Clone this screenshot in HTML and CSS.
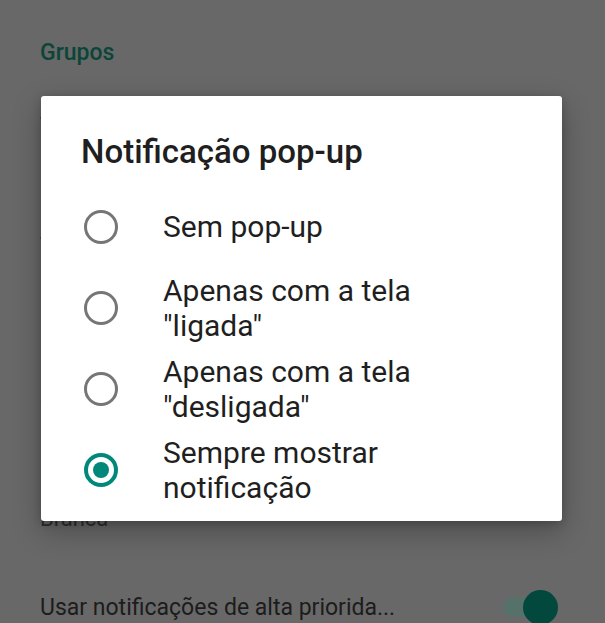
FILE: index.html
```html
<!DOCTYPE html>
<html lang="pt-BR">
<head>
  <meta charset="UTF-8">
  <meta name="viewport" content="width=device-width, initial-scale=1.0">
  <title>Notificação pop-up</title>
  <link rel="stylesheet" href="styles.css">
</head>
<body>
  <div class="screen">
    <div class="settings">
      <h2 class="settings__header">Grupos</h2>

      <div class="pref">
        <div class="pref__title">Tom de notificação</div>
        <div class="pref__sub">Padrão (Spaceline)</div>
      </div>
      <div class="pref">
        <div class="pref__title">Vibrar</div>
        <div class="pref__sub">Padrão</div>
      </div>
      <div class="pref">
        <div class="pref__title">Notificação pop-up</div>
        <div class="pref__sub">Sempre mostrar notificação</div>
      </div>
      <div class="pref">
        <div class="pref__title">Luz</div>
        <div class="pref__sub">Branca</div>
      </div>
      <div class="pref pref--switch">
        <div class="pref__title">Usar notificações de alta priorida...</div>
        <div class="switch">
          <div class="switch__track"></div>
          <div class="switch__thumb"></div>
        </div>
      </div>
    </div>

    <div class="dialog">
      <h1 class="dialog__title">Notificação pop-up</h1>
      <div class="dialog__options">
        <div class="option">
          <span class="radio"></span>
          <span class="option__label">Sem pop-up</span>
        </div>
        <div class="option">
          <span class="radio"></span>
          <span class="option__label">Apenas com a tela "ligada"</span>
        </div>
        <div class="option">
          <span class="radio"></span>
          <span class="option__label">Apenas com a tela "desligada"</span>
        </div>
        <div class="option option--checked">
          <span class="radio"></span>
          <span class="option__label">Sempre mostrar notificação</span>
        </div>
      </div>
    </div>
  </div>
</body>
</html>
```

FILE: styles.css
```css
*,
*::after,
*::before {
  padding: 0;
  margin: 0;
  box-sizing: border-box;
}

:root {
  --scrim: #686868;
  --dim-teal: #0b4539;
  --dim-text: #1c1c1c;
  --dim-sub: #2e2e2e;
  --teal: #00897b;
  --radio-off: #767676;
  --text: #1f1f1f;
}

body {
  width: 605px;
  height: 623px;
  overflow: hidden;
  background-color: var(--scrim);
  font-family: Roboto, "Noto Sans", sans-serif;
}

.screen {
  position: relative;
  height: 100%;
}

.settings__header {
  padding: 39px 40px 15px;
  font-size: 23px;
  line-height: 28px;
  font-weight: 500;
  color: var(--dim-teal);
}

.pref {
  padding: 28px 40px;
}

.pref__title {
  font-size: 23px;
  line-height: 34px;
  color: var(--dim-text);
}

.pref__sub {
  font-size: 22px;
  line-height: 30px;
  color: var(--dim-sub);
}

.pref--switch {
  display: flex;
  align-items: center;
  justify-content: space-between;
  padding-right: 47px;
}

.switch {
  position: relative;
  width: 55px;
  height: 35px;
}

.switch__track {
  position: absolute;
  left: 0;
  top: 7px;
  width: 42px;
  height: 20px;
  border-radius: 10px;
  background-color: #56706a;
}

.switch__thumb {
  position: absolute;
  right: 0;
  top: 0;
  width: 35px;
  height: 35px;
  border-radius: 50%;
  background-color: #02483d;
}

/* dialog */

.dialog {
  position: absolute;
  left: 41px;
  top: 96px;
  width: 521px;
  padding: 36px 0 11px;
  border-radius: 3px;
  background-color: #fff;
  box-shadow: 0 10px 28px rgba(0, 0, 0, 0.28), 0 2px 8px rgba(0, 0, 0, 0.18);
}

.dialog__title {
  padding: 0 40px;
  margin-bottom: 14px;
  font-size: 33px;
  line-height: 40px;
  font-weight: 500;
  color: var(--text);
}

.option {
  display: flex;
  align-items: center;
  min-height: 81px;
  padding: 0 80px 0 43px;
}

.radio {
  flex: none;
  position: relative;
  width: 34px;
  height: 34px;
  border: 3px solid var(--radio-off);
  border-radius: 50%;
  margin-right: 45px;
}

.option--checked .radio {
  border: 4px solid var(--teal);
}

.option--checked .radio::after {
  content: "";
  position: absolute;
  left: 50%;
  top: 50%;
  transform: translate(-50%, -50%);
  width: 16px;
  height: 16px;
  border-radius: 50%;
  background-color: var(--teal);
}

.option__label {
  font-size: 30px;
  line-height: 35px;
  color: var(--text);
}
```
